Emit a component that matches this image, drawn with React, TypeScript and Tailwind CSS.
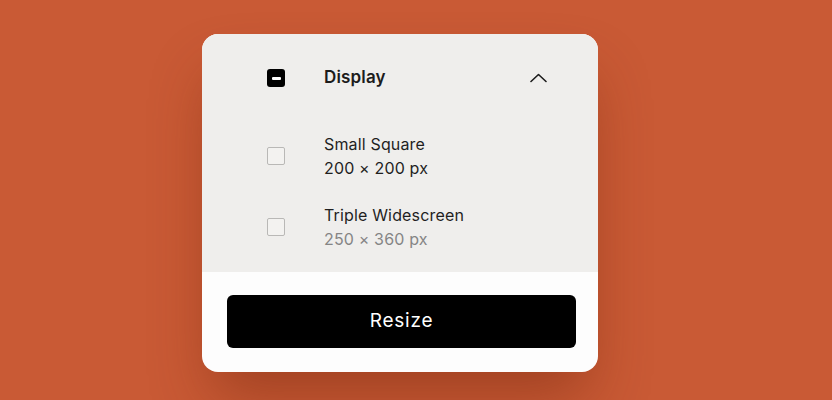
import React from "react";

function Checkbox({ state }: { state: "mixed" | "off" }) {
  if (state === "mixed") {
    return (
      <div className="w-[18px] h-[18px] rounded-[3px] bg-black flex items-center justify-center">
        <div className="w-[9px] h-[3px] bg-white rounded-[1px]" />
      </div>
    );
  }
  return <div className="w-[18px] h-[18px] rounded-[2px] border-[1.5px] border-[#b9b8b6] bg-[#f3f2f0]" />;
}

export default function App() {
  return (
    <div className="w-[832px] h-[400px] bg-[#c95a35] overflow-hidden" style={{ fontFamily: "Inter, 'Noto Sans', sans-serif" }}>
      <div className="ml-[202px] mt-[34px] w-[396px] rounded-[16px] overflow-hidden bg-[#fdfdfd] shadow-[0_34px_60px_-10px_rgba(110,35,10,0.45)]">
        <div className="bg-[#efeeec] pt-[32px] pb-[21px] pl-[65px] pr-[51px]">
          <div className="flex items-center h-[24px]">
            <Checkbox state="mixed" />
            <div className="ml-[39px] flex-1 text-[17px] font-semibold tracking-[0.01em] text-[#1c1c1c]">Display</div>
            <svg width="17" height="10" viewBox="0 0 17 10" fill="none">
              <polyline points="1,8.5 8.5,1.5 16,8.5" stroke="#1c1c1c" strokeWidth="1.6" strokeLinecap="round" strokeLinejoin="round" />
            </svg>
          </div>
          <div className="mt-[42px] flex flex-col gap-[23px]">
            <div className="flex items-center">
              <Checkbox state="off" />
              <div className="ml-[39px] text-[16px] leading-[24px] tracking-[0.01em] text-[#1f1f1f]">
                <div>Small Square</div>
                <div>200 × 200 px</div>
              </div>
            </div>
            <div className="flex items-center">
              <Checkbox state="off" />
              <div className="ml-[39px] text-[16px] leading-[24px] tracking-[0.01em] text-[#1f1f1f]">
                <div>Triple Widescreen</div>
                <div className="text-[#858585]">250 × 360 px</div>
              </div>
            </div>
          </div>
        </div>
        <div className="pt-[23px] pb-[24px] pl-[25px] pr-[22px]">
          <button className="w-full h-[53px] rounded-[6px] bg-black text-white text-[19px] font-normal tracking-[0.04em]">
            Resize
          </button>
        </div>
      </div>
    </div>
  );
}
